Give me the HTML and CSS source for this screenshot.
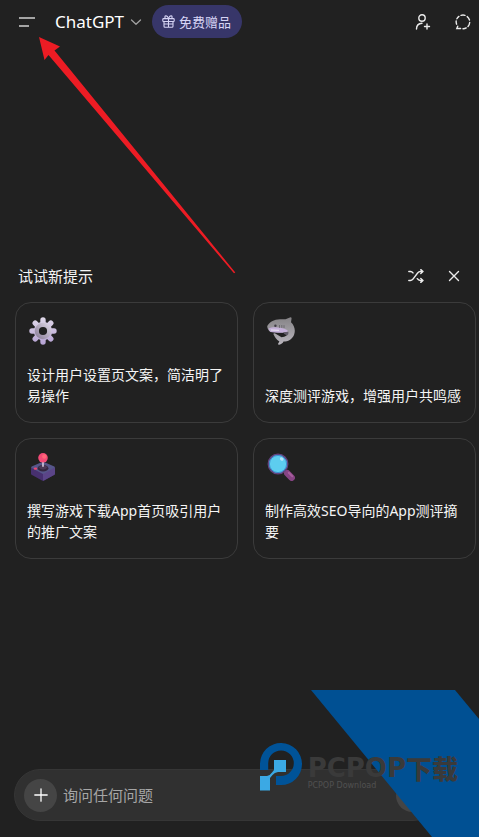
FILE: index.html
```html
<!DOCTYPE html>
<html lang="zh-CN">
<head>
<meta charset="utf-8">
<meta name="viewport" content="width=device-width, initial-scale=1">
<title>ChatGPT</title>
<link rel="stylesheet" href="styles.css">
</head>
<body>
<div class="app">
  <header class="topbar">
    <button class="icon-btn menu" aria-label="菜单">
      <svg width="18" height="12" viewBox="0 0 18 12" fill="none" stroke="currentColor" stroke-width="1.6"><path d="M1 2h16M1 10h10"/></svg>
    </button>
    <button class="model">ChatGPT
      <svg width="12" height="8" viewBox="0 0 12 8" fill="none" stroke="#a0a0a0" stroke-width="1.3" stroke-linecap="round" stroke-linejoin="round"><path d="M1.5 2 6 6.3 10.500 2"/></svg>
    </button>
    <button class="gift">
      <svg width="13" height="13" viewBox="0 0 13 13" fill="none" stroke="currentColor" stroke-width="1.1" stroke-linejoin="round"><rect x=".8" y="3.600" width="11.400" height="2.900" rx=".8"/><path d="M2 6.500v4.700q0 1 1 1h7q1 0 1-1V6.500M6.500 3.600v8.600M6.500 3.600C5.800 1.500 4.600.7 3.700.9 2.500 1.200 2.600 3.200 3.900 3.600M6.500 3.600C7.200 1.500 8.400.7 9.300.9 10.500 1.200 10.400 3.200 9.100 3.600M2 9h9"/></svg>
      免费赠品
    </button>
    <span class="spacer"></span>
    <button class="icon-btn" aria-label="邀请">
      <svg width="16" height="16" viewBox="0 0 16 16" fill="none" stroke="currentColor" stroke-width="1.4" stroke-linecap="round"><circle cx="7" cy="4" r="3.200"/><path d="M1.500 15c0-3.500 1.600-5.500 5.500-5.700M12 10v5M9.500 12.500h5"/></svg>
    </button>
    <button class="icon-btn" aria-label="临时聊天">
      <svg width="16" height="16" viewBox="0 0 16 16" fill="none" stroke="currentColor" stroke-width="1.4" stroke-linecap="round"><path d="M6 1.300Q8 .7 10 1.300M12.200 2.600Q13.800 3.900 14.500 6M14.700 8.500Q14.500 10.800 13 12.500M11.200 13.900Q9.700 14.800 8 14.700M5.600 14.500H1.800L2.700 12.200M1.600 10.200Q1 8.500 1.200 6.900M1.900 4.800Q2.600 3.400 3.900 2.400"/></svg>
    </button>
  </header>

  <main class="content">
    <section class="prompts">
      <div class="prompts-head">
        <h2>试试新提示</h2>
        <button class="icon-btn" aria-label="换一批">
          <svg width="16" height="14" viewBox="0 0 16 14" fill="none" stroke="currentColor" stroke-width="1.400" stroke-linecap="round" stroke-linejoin="round"><path d="M.8 2.500h1.700Q4 2.500 5 3.900M.8 11.500h1.500Q3.800 11.500 4.800 10.300L9.600 4Q10.800 2.500 12.300 2.500H15M9.300 9.700Q10.500 11.500 12.300 11.500H15M12.800.6 15 2.500 12.800 4.500M12.800 9.500 15 11.500 12.800 13.400"/></svg>
        </button>
        <button class="icon-btn" aria-label="关闭">
          <svg width="12" height="12" viewBox="0 0 12 12" fill="none" stroke="currentColor" stroke-width="1.400" stroke-linecap="round"><path d="M1.500 1.500l9 9M10.500 1.500l-9 9"/></svg>
        </button>
      </div>
      <div class="cards">
        <button class="card">
          <svg width="28" height="28" viewBox="0 0 28 28">
            <defs><linearGradient id="gear" gradientUnits="userSpaceOnUse" x1="0" y1="0" x2="0" y2="28"><stop offset="0" stop-color="#e0d9e9"/><stop offset="1" stop-color="#b5a1d3"/></linearGradient>
            <linearGradient id="ring" x1="1" y1="0" x2="0" y2="1"><stop offset="0" stop-color="#d6cfde"/><stop offset="1" stop-color="#8f839d"/></linearGradient></defs>
            <g stroke="url(#gear)" stroke-width="5.400" stroke-linecap="round"><path d="M14 3v22M3 14h22M6.200 6.200l15.600 15.600M21.800 6.200 6.200 21.800"/></g>
            <circle cx="14" cy="14" r="9.200" fill="url(#gear)"/>
            <circle cx="14" cy="14" r="6.200" fill="#212121" stroke="url(#ring)" stroke-width="4.200"/>
          </svg>
          <span>设计用户设置页文案，简洁明了易操作</span>
        </button>
        <button class="card">
          <svg width="28" height="28" viewBox="0 0 28 28">
            <defs><linearGradient id="shark" x1="0" y1="0" x2="0" y2="1"><stop offset="0" stop-color="#858386"/><stop offset="1" stop-color="#b9b5bd"/></linearGradient></defs>
            <path d="M.3 9C2 5.500 7 2.400 13 2.300 16 2.100 17.500 2.300 18.500 2.200L23.500.2Q24.800.1 24.500 2L24 5.200C27.500 8.500 28.800 13.500 27 18 25.200 22.300 21 24.600 16.500 24.600 15.800 26.300 14.200 27.300 12.200 27.800 10.900 28 10.800 27 11.500 26L12.400 24.400C9.500 22.800 7.700 20 6.500 17.200 6.200 16.100 7.200 15.900 8.300 16.500L14.500 20.200C19 20.200 20.800 18 20.600 15.500L3.500 14.900C1.500 13.900 0 11.200.3 9Z" fill="url(#shark)"/>
            <path d="M1.500 11.500C6 9.500 14 10 20.500 13.200L20.600 15.400C14 15.900 8 15.800 3.700 14.900Q2.200 13.700 1.500 11.500Z" fill="#c5b1da"/>
            <path d="M16 15.300 21.400 14.800Q22 17.300 20 18.600Q17.300 18 16 15.300Z" fill="#625c69"/>
            <path d="M4 13 12 13.300" stroke="#eee8f4" stroke-width="1"/>
            <path d="M12.500 8v2.800M14.800 8v2.800M17 8.200v2.800" stroke="#625f66" stroke-width=".8"/>
            <circle cx="8.400" cy="8.700" r="1.200" fill="#403c46"/>
          </svg>
          <span>深度测评游戏，增强用户共鸣感</span>
        </button>
        <button class="card">
          <svg width="28" height="28" viewBox="0 0 28 28">
            <path d="M2 14.500v6Q2 21.500 3 22L13 27.500Q14 28 15 27.500L25 22Q26 21.500 26 20.500V14.500Z" fill="#47306f"/>
            <path d="M14 19.500 26 14.500v6Q26 21.500 25 22L15 27.500 14 27.800Z" fill="#5b4588"/>
            <path d="M2.700 13.400 13 9.100Q14 8.700 15 9.100L25.300 13.400Q26.600 14.200 25.300 15L15 20.600Q14 21.200 13 20.600L2.700 15Q1.400 14.200 2.700 13.400Z" fill="#56568a"/>
            <ellipse cx="14" cy="15.300" rx="5.400" ry="3.200" fill="#34263f"/>
            <path d="M9.500 14.300Q12.500 11.500 14 11.500 15.500 11.500 18.500 14.300 16.500 16.600 14 16.500 11.500 16.600 9.500 14.300Z" fill="#4b3956"/>
            <path d="M14 8v5" stroke="#c9bdd2" stroke-width="1.800" stroke-linecap="round"/>
            <circle cx="14" cy="4.800" r="4.800" fill="#f34a76"/><circle cx="15.300" cy="3.500" r="2.200" fill="#ff6678"/>
            <ellipse cx="6.500" cy="15.700" rx="1.800" ry="1.100" fill="#ef4672"/>
          </svg>
          <span>撰写游戏下载App首页吸引用户的推广文案</span>
        </button>
        <button class="card">
          <svg width="28" height="28" viewBox="0 0 28 28">
            <path d="M17.200 17.200l3 3" stroke="#706077" stroke-width="3"/>
            <path d="M20.300 20.300 24.700 24.700" stroke="#874484" stroke-width="6.500" stroke-linecap="round"/>
            <path d="M21.800 19.800 25.300 23.300" stroke="#a75d9d" stroke-width="2" stroke-linecap="round"/>
            <circle cx="11" cy="11" r="9.700" fill="#5dcdef" stroke="#62437f" stroke-width="1.500"/>
            <circle cx="11" cy="11" r="8.600" fill="none" stroke="#3c8fce" stroke-width="1"/>
            <ellipse cx="14.700" cy="6" rx="2" ry="1.500" transform="rotate(40 14.700 6)" fill="#b4e5fa"/>
          </svg>
          <span>制作高效SEO导向的App测评摘要</span>
        </button>
      </div>
    </section>
  </main>

  <form class="composer">
    <button type="button" class="round" aria-label="添加">
      <svg width="14" height="14" viewBox="0 0 14 14" fill="none" stroke="#fff" stroke-width="1.300" stroke-linecap="round"><path d="M7 .8v12.400M.8 7h12.400"/></svg>
    </button>
    <input type="text" aria-label="询问任何问题" placeholder="询问任何问题">
    <button type="button" class="round" aria-label="语音输入"></button>
  </form>

  <svg class="arrow" width="240" height="280" viewBox="0 0 240 280" aria-hidden="true"><path d="M39 37 60 46.500 54.500 50.500 235.300 272.500 234 273.300 48.500 55 44.500 60Z" fill="#ed1c24"/></svg>

  <div class="watermark">
    <svg class="band" width="168" height="147" viewBox="0 0 168 147" aria-hidden="true"><path d="M0 0H144L168 29V147H121Z" fill="#005093"/></svg>
    <div class="brand">
      <svg width="44" height="50" viewBox="0 0 44 50" aria-hidden="true">
        <path d="M1 28V21.500A21 21 0 1 1 22 43H17V34H22A12.800 12.800 0 1 0 9.200 21V28Z" fill="#005398"/>
        <path d="M15 18H27V30H19Q15.500 30.500 13.500 33L11 36V48.500H1V34H8Q11 33.500 13 30.500L15 28Z" fill="#3ba9e4"/>
      </svg>
      <div class="brand-text">
        <div class="brand-name">PCPOP<span>下载</span></div>
        <div class="brand-sub">PCPOP Download</div>
      </div>
    </div>
  </div>
</div>
</body>
</html>
```
FILE: styles.css
```css
* {
  box-sizing: border-box;
}

body {
  margin: 0;
  background: #212121;
  color: #f5f5f5;
  font-family: "Noto Sans", "Noto Sans CJK SC", sans-serif;
}

button,
input {
  margin: 0;
  padding: 0;
  border: 0;
  background: none;
  color: inherit;
  font: inherit;
}

svg {
  display: block;
  flex: none;
}

.app {
  position: relative;
  display: flex;
  flex-direction: column;
  min-height: 100vh;
  padding-bottom: 16px;
  overflow: hidden;
}

.topbar {
  display: flex;
  align-items: center;
  padding: 5px 0 5px 11px;
}

.icon-btn {
  display: flex;
  align-items: center;
  justify-content: center;
  width: 32px;
  height: 32px;
  color: #ececec;
}

.topbar .icon-btn + .icon-btn {
  margin-left: 8px;
}

.menu {
  color: #d0d0d0;
}

.model {
  display: flex;
  align-items: center;
  gap: 6px;
  margin-left: 12px;
  color: #fff;
  font-size: 17px;
  line-height: 24px;
}

.gift {
  display: flex;
  align-items: center;
  gap: 4px;
  height: 33px;
  margin-left: 10px;
  padding: 0 11px 0 10px;
  border-radius: 17px;
  background: #373669;
  color: #d6d4f5;
  font-size: 13px;
}

.spacer {
  flex: 1;
}

.content {
  display: flex;
  flex: 1;
  flex-direction: column;
  justify-content: center;
  padding: 6px 3px 0 15px;
}

.prompts-head {
  display: flex;
  align-items: center;
  gap: 6px;
  margin-bottom: 10px;
  padding: 0 6px 0 3px;
}

.prompts-head h2 {
  flex: 1;
  margin: 0;
  font-size: 15px;
  font-weight: 400;
}

.cards {
  display: grid;
  grid-template-columns: 1fr 1fr;
  gap: 15px;
}

.card {
  display: flex;
  flex-direction: column;
  justify-content: space-between;
  min-height: 121px;
  padding: 14px 11px 16px;
  border: 1px solid #3b3b3b;
  border-radius: 16px;
  font-size: 14px;
  line-height: 21px;
  text-align: left;
}

.card svg {
  margin-left: 2px;
}

.composer {
  display: flex;
  align-items: center;
  gap: 6px;
  height: 52px;
  margin: 0 40px 0 14px;
  padding: 0 9px;
  border: 1px solid #363636;
  border-radius: 26px;
  background: #303030;
}

.composer input {
  flex: 1;
  min-width: 0;
  font-size: 15px;
  outline: none;
}

.composer input::placeholder {
  color: #a6a6a6;
  opacity: 1;
}

.round {
  display: flex;
  align-items: center;
  justify-content: center;
  width: 33px;
  height: 33px;
  border-radius: 50%;
  background: #454545;
}

.arrow {
  position: absolute;
  top: 0;
  left: 0;
  pointer-events: none;
}

.watermark {
  position: absolute;
  right: 0;
  bottom: 0;
  pointer-events: none;
}

.brand {
  position: absolute;
  right: 21px;
  bottom: 45px;
  display: flex;
  gap: 5px;
  color: #3a3a3a;
  white-space: nowrap;
}

.brand-text {
  padding-top: 12px;
}

.brand-name {
  display: flex;
  align-items: center;
  font-family: "DejaVu Sans", sans-serif;
  font-size: 26px;
  font-weight: 700;
  line-height: 28px;
}

.brand-name span {
  font-family: "Noto Sans CJK SC", sans-serif;
  font-weight: 900;
}

.brand-sub {
  color: #505050;
  font-family: "DejaVu Sans", sans-serif;
  font-size: 8px;
  line-height: 8px;
}
```
